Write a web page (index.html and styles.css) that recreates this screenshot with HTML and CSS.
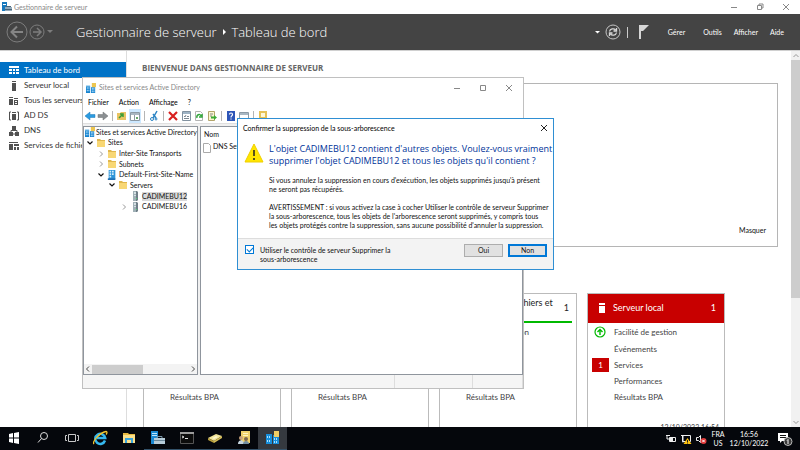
FILE: index.html
```html
<!DOCTYPE html>
<html lang="fr">
<head>
<meta charset="UTF-8">
<meta name="viewport" content="width=device-width, initial-scale=1.0">
<title>Gestionnaire de serveur</title>
<link rel="stylesheet" href="styles.css">
</head>
<body>

<!-- SHARED ICONS -->
<svg class="sprite" aria-hidden="true">
  <symbol id="i-folder" viewBox="0 0 10 10"><path d="M1 1h3l1 1h4v7H1z" fill="#e0b64c"/><path d="M1 3h8v6H1z" fill="#f8d775"/></symbol>
  <symbol id="i-site" viewBox="0 0 12 12"><path d="M2 0h8v11H2z" fill="#2d94d8"/><path d="M3 1h2v2H3zM6 1h2v2H6zM3 4h2v2H3zM6 4h2v2H6zM3 7h2v2H3z" fill="#d4edfb"/><path d="M1 10h9v2H1z" fill="#1f6fb5"/></symbol>
  <symbol id="i-server" viewBox="0 0 10 10"><path d="M3 0h4l1 1v8l-1 1H3z" fill="#6f7f88"/><path d="M3 0h3v10H3z" fill="#9fb0b6"/><path d="M4 1h2v2H4zM4 4h2v1H4z" fill="#d5e0e4"/><path d="M6 7h1v1H6z" fill="#52d273"/></symbol>
  <symbol id="i-ad" viewBox="0 0 12 12"><path d="M0 4h5v8H0zM6 5h5v7H6z" fill="#1683cf"/><path d="M1 5h1v2H1zM3 5h1v2H3zM1 8h1v2H1zM3 8h1v2H3zM7 6h1v2H7zM9 6h1v2H9zM7 9h1v2H7zM9 9h1v2H9z" fill="#c9ebff"/><path d="M7 0h5v5H7z" fill="#edc64f"/><path d="M0 3h5v1H0z" fill="#6db9e6"/></symbol>
  <symbol id="i-close" viewBox="0 0 8 8"><path d="M1 1l6 6M7 1L1 7" fill="none" stroke="currentColor"/></symbol>
  <symbol id="i-min" viewBox="0 0 8 8"><path d="M1 4.500h6" fill="none" stroke="currentColor"/></symbol>
  <symbol id="i-open" viewBox="0 0 8 8"><path d="M1.500 2.500L4 5l2.500-2.500" fill="none" stroke="currentColor" stroke-width="1.200"/></symbol>
  <symbol id="i-shut" viewBox="0 0 8 8"><path d="M3 1.500L5.500 4 3 6.500" fill="none" stroke="currentColor"/></symbol>
</svg>

<div class="desktop">

  <!-- SERVER MANAGER -->
  <div class="titlebar">
    <svg class="ico10" viewBox="0 0 10 10"><path d="M0 0h5v9H0z" fill="#1879bd"/><path d="M1 2h3v1H1z" fill="#fff"/><path d="M3 5h7v4H3z" fill="#93aabb"/><path d="M4 4h5v1H4zM3 7h7v1H3z" fill="#49657a"/></svg>
    <span class="grow">Gestionnaire de serveur</span>
    <button class="winbtn" aria-label="Réduire"><svg class="ico8"><use href="#i-min"/></svg></button>
    <button class="winbtn" aria-label="Restaurer"><svg class="ico8" viewBox="0 0 8 8"><path d="M1.500 2.500h4v4h-4zM3 2V1h4v4H6" fill="none" stroke="currentColor"/></svg></button>
    <button class="winbtn" aria-label="Fermer"><svg class="ico8"><use href="#i-close"/></svg></button>
  </div>

  <div class="header">
    <div class="nav">
      <button aria-label="Précédent"><svg class="back" viewBox="0 0 22 22"><circle cx="11" cy="11" r="10" fill="none" stroke="#7d7d7d"/><path d="M17 11H6M11 5.500L5.500 11l5.500 5.500" fill="none" stroke="#858585" stroke-width="2"/></svg></button>
      <button aria-label="Suivant"><svg class="fwd" viewBox="0 0 16 16"><circle cx="8" cy="8" r="7" fill="none" stroke="#7d7d7d"/><path d="M4 8h8M8 4l4 4-4 4" fill="none" stroke="#7d7d7d" stroke-width="1.500"/></svg></button>
      <svg class="ico8" viewBox="0 0 8 8"><path d="M1 2h6L4 5z" fill="#7d7d7d"/></svg>
    </div>
    <h1>Gestionnaire de serveur <svg class="crumb" viewBox="0 0 8 8"><path d="M3 1l3 3-3 3z" fill="#fff"/></svg> Tableau de bord</h1>
    <div class="tools">
      <svg class="ico8" viewBox="0 0 8 8"><path d="M2 3h5L4.500 5.500z" fill="#fff"/></svg>
      <button aria-label="Actualiser"><svg class="refresh" viewBox="0 0 16 16"><circle cx="8" cy="8" r="7" fill="none" stroke="#c4c4c4"/><path d="M4.500 7.500C5 4.500 9 4 10.500 6M11.500 4v3h-3M11.500 8.500C11 11.500 7 12 5.500 10M4.500 12V9h3" fill="none" stroke="#d8d8d8" stroke-width="1.300"/></svg></button>
      <span class="bar"></span>
      <button aria-label="Notifications"><svg class="flag" viewBox="0 0 12 16"><path d="M1 1h10L5 7H3v8H1z" fill="#d6d6d6"/></svg></button>
    </div>
    <nav class="links"><a href="#">Gérer</a><a href="#">Outils</a><a href="#">Afficher</a><a href="#">Aide</a></nav>
  </div>

  <div class="main">
    <nav class="sidebar">
      <a href="#" class="active"><svg class="ico10" viewBox="0 0 10 10"><path d="M0 1h10v2H0zM0 4h3v2H0zM4 4h2v2H4zM7 4h3v2H7zM0 7h3v2H0zM4 7h2v2H4zM7 7h3v2H7z" fill="#fff"/></svg>Tableau de bord</a>
      <a href="#"><svg class="ico10" viewBox="0 0 10 10"><path d="M3 0h4v1H3zM3 2h4v8H3z" fill="#505050"/></svg>Serveur local</a>
      <a href="#"><svg class="ico10" viewBox="0 0 10 10"><path d="M0 1h4v1H0zM0 3h4v6H0zM5 2h4v1H5zM5 4h4v5H5z" fill="#505050"/><path d="M6 5h2v1H6zM6 7h2v1H6z" fill="#fff"/></svg>Tous les serveurs</a>
      <a href="#"><svg class="ico10" viewBox="0 0 10 10"><path d="M2 1H.500v8H2M8 1h1.500v8H8" fill="none" stroke="#505050"/><path d="M3 1h4v1H3zM3 3h4v6H3z" fill="#505050"/></svg>AD DS</a>
      <a href="#"><svg class="ico10" viewBox="0 0 10 10"><path d="M3 0h4v4H3zM0 6h4v4H0zM6 6h4v4H6z" fill="#505050"/><path d="M5 3v2M2 6V4.500h6V6M4 8h2" fill="none" stroke="#505050"/></svg>DNS</a>
      <a href="#"><svg class="ico10" viewBox="0 0 10 10"><path d="M0 1h9v1H0zM0 3h4v6H0zM5 3h5v2H5zM5 6h2v3H5zM8 6h2v3H8z" fill="#505050"/></svg>Services de fichiers</a>
    </nav>

    <main class="content">
      <h2>BIENVENUE DANS GESTIONNAIRE DE SERVEUR</h2>
      <section class="welcome"><button>Masquer</button></section>
      <section class="tiles">
        <div class="tile">
          <div class="tile-head"><span class="tile-icon"></span><span class="grow">AD DS</span><span>1</span></div>
          <ul><li>Facilité de gestion</li><li>Événements</li><li>Services</li><li>Performances</li><li>Résultats BPA</li></ul>
        </div>
        <div class="tile">
          <div class="tile-head"><span class="tile-icon"></span><span class="grow">DNS</span><span>1</span></div>
          <ul><li>Facilité de gestion</li><li>Événements</li><li>Services</li><li>Performances</li><li>Résultats BPA</li></ul>
        </div>
        <div class="tile">
          <div class="tile-head"><span class="tile-icon"></span><span class="grow">Services de fichiers et<br>de stockage</span><span>1</span></div>
          <ul><li>Facilité de gestion</li><li>Événements</li><li>Services</li><li>Performances</li><li>Résultats BPA</li></ul>
        </div>
        <div class="tile alert">
          <div class="tile-head"><span class="tile-icon"><svg class="ico10" viewBox="0 0 10 10"><path d="M2 0h6v2H2zM2 3h6v7H2z" fill="#fff"/></svg></span><span class="grow">Serveur local</span><span>1</span></div>
          <ul>
            <li><svg class="up" viewBox="0 0 12 12"><circle cx="6" cy="6" r="5" fill="none" stroke="#00b900" stroke-width="1.200"/><path d="M6 9V3.500M3.500 6L6 3.500 8.500 6" fill="none" stroke="#00b900" stroke-width="1.400"/></svg>Facilité de gestion</li>
            <li>Événements</li>
            <li><span class="count">1</span>Services</li>
            <li>Performances</li>
            <li>Résultats BPA</li>
          </ul>
          <p class="stamp">12/10/2022 16:54</p>
        </div>
      </section>
    </main>

    <div class="vscroll">
      <svg class="ico8" viewBox="0 0 8 8"><path d="M1.500 5L4 2.500 6.500 5" fill="none" stroke="#999"/></svg>
      <span class="thumb"></span>
      <svg class="ico8" viewBox="0 0 8 8"><path d="M1.500 3L4 5.500 6.500 3" fill="none" stroke="#999"/></svg>
    </div>
  </div>

  <!-- TASKBAR -->
  <div class="taskbar">
    <div class="tasks">
      <button class="task" aria-label="Démarrer"><svg viewBox="0 0 16 16"><path d="M3 4l4-1v4.500H3zM8 3l5-1v5.500H8zM3 8.500h4V13l-4-1zM8 8.500h5V14l-5-1z" fill="#fff"/></svg></button>
      <button class="task" aria-label="Rechercher"><svg viewBox="0 0 16 16"><circle cx="9" cy="6" r="3.500" fill="none" stroke="#ddd"/><path d="M6.500 8.500L3 12.500" stroke="#ddd"/></svg></button>
      <button class="task" aria-label="Vue des tâches"><svg viewBox="0 0 16 16"><path d="M4.500 4.500h7v7h-7zM3 5.500H1.500v5H3M13 5.500h1.500v5H13" fill="none" stroke="#c8c8c8"/></svg></button>
      <button class="task" aria-label="Internet Explorer"><svg viewBox="0 0 16 16"><path d="M13 10.500A5 5 0 1 1 13.200 8H5" fill="none" stroke="#35b7ee" stroke-width="2.500"/><path d="M2 14C0 12 7 3 14 1.500c1.500 0 1 2 0 3" fill="none" stroke="#f4c52d" stroke-width="1.300"/></svg></button>
      <button class="task" aria-label="Explorateur de fichiers"><svg viewBox="0 0 16 16"><path d="M2 3h5l1 1h6v9H2z" fill="#e8b93f"/><path d="M2 5h12v8H2z" fill="#fbe08b"/><path d="M4 8h8v5h-2v-3H6v3H4z" fill="#3ba4dc"/></svg></button>
      <button class="task open" aria-label="Gestionnaire de serveur"><svg viewBox="0 0 16 16"><path d="M1 1h7v13H1z" fill="#1a88d2"/><path d="M2 3h5v1H2zM2 5h5v1H2z" fill="#bfe5fa"/><path d="M4 8h11v6H4z" fill="#b6cbd8"/><path d="M7 8V6.500h5V8" fill="none" stroke="#7692a5"/><path d="M4 10h11v1H4z" fill="#6b8799"/></svg></button>
      <button class="task open" aria-label="Invite de commandes"><svg viewBox="0 0 16 16"><path d="M1.500 2.500h13v11h-13z" fill="#0c0c0c" stroke="#555"/><path d="M1 2h14v2H1z" fill="#9c9c9c"/><path d="M3 6l2 1-2 1M6 8.500h3" fill="none" stroke="#ddd"/></svg></button>
      <button class="task open" aria-label="Disque"><svg viewBox="0 0 16 16"><path d="M1 8l8-4 6 2-8 5z" fill="#f2e59a"/><path d="M1 8l6 3v2l-6-3z" fill="#b99f3c"/><path d="M7 11l8-5v2l-8 5z" fill="#d6bd57"/><path d="M5 8l4-2 2 1-4 2z" fill="#fff8d0"/></svg></button>
      <button class="task open" aria-label="Utilisateurs Active Directory"><svg viewBox="0 0 16 16"><path d="M5 1h9v12H5z" fill="#efd06a"/><path d="M7 3h5v1H7zM7 5h5v1H7z" fill="#fff4c0"/><circle cx="5" cy="8" r="2" fill="#c9a27c"/><path d="M2 14c0-5 6-5 6 0z" fill="#c7d5de"/><circle cx="10" cy="9" r="2" fill="#7c6650"/><path d="M7 14c0-4 6-4 6 0z" fill="#728ea2"/></svg></button>
      <button class="task open current" aria-label="Sites et services Active Directory"><svg viewBox="0 0 16 16"><path d="M1 4h6v10H1zM8 5h6v9H8z" fill="#168edb"/><path d="M2 6h1v2H2zM4 6h1v2H4zM2 10h1v2H2zM4 10h1v2H4zM9 8h1v2H9zM11 8h1v2h-1zM9 11h1v2H9zM11 11h1v2h-1z" fill="#a9e0ff"/><path d="M9 1h5v6H9z" fill="#f0cf66"/></svg></button>
    </div>
    <span class="grow"></span>
    <div class="tray">
      <svg viewBox="0 0 12 12"><path d="M4.500 4.500h6v4h-6z" fill="none" stroke="#eee"/><path d="M5 5h3v3H5z" fill="#eee"/><path d="M1 2.500h4M2 3v3h2" fill="none" stroke="#eee"/></svg>
      <svg viewBox="0 0 12 12"><path d="M2.500 2.500h8v6h-8zM1 2.500h2v7" fill="none" stroke="#eee"/><path d="M7.500 5l4 6h-8z" fill="#ffc20e"/><path d="M7.500 7v2M7.500 9.500v1" stroke="#222"/></svg>
      <svg viewBox="0 0 12 12"><path d="M1.500 4.500h2l2-2v7l-2-2h-2z" fill="none" stroke="#eee"/><circle cx="8.500" cy="8" r="3" fill="#e23838"/><path d="M7.300 6.800l2.400 2.400M9.700 6.800L7.300 9.200" stroke="#fff"/></svg>
    </div>
    <div class="clock lang"><span>FRA</span><span>US</span></div>
    <div class="clock"><span>16:56</span><span>12/10/2022</span></div>
    <button class="notif" aria-label="Notifications"><svg viewBox="0 0 16 16"><path d="M1 2h10v8H5l-2 2v-2H1z" fill="#fff"/><path d="M3 4.500h6M3 6.500h6" stroke="#111"/><circle cx="11" cy="10.500" r="4" fill="#3a3a3a" stroke="#bbb"/><path d="M10 9.500l1-1v4.500" fill="none" stroke="#fff"/></svg></button>
  </div>

  <!-- AD SITES AND SERVICES WINDOW -->
  <div class="window mmc">
    <div class="mmc-title">
      <svg class="ico10"><use href="#i-ad"/></svg>
      <span class="grow">Sites et services Active Directory</span>
      <button class="winbtn" aria-label="Réduire"><svg class="ico8"><use href="#i-min"/></svg></button>
      <button class="winbtn" aria-label="Agrandir"><svg class="ico8" viewBox="0 0 8 8"><path d="M1.500 1.500h5v5h-5z" fill="none" stroke="currentColor"/></svg></button>
      <button class="winbtn" aria-label="Fermer"><svg class="ico8"><use href="#i-close"/></svg></button>
    </div>
    <div class="menubar"><button>Fichier</button><button>Action</button><button>Affichage</button><button>?</button></div>
    <div class="toolbar">
      <button aria-label="Précédent"><svg viewBox="0 0 12 12"><path d="M1 6l5-4v2.500h5v3H6V10z" fill="#2b9be0" stroke="#1d79b8" stroke-width=".5"/></svg></button>
      <button aria-label="Suivant"><svg viewBox="0 0 12 12"><path d="M11 6L6 2v2.500H1v3h5V10z" fill="#8b8f92" stroke="#6d7073" stroke-width=".5"/></svg></button>
      <span class="sep"></span>
      <button aria-label="Dossier parent"><svg viewBox="0 0 12 12"><path d="M1 3h3l1-1h5v8H1z" fill="#e9c463"/><path d="M3 8l3-3M4 4h3v3" fill="none" stroke="#3a9c36" stroke-width="1.500"/></svg></button>
      <button class="on" aria-label="Arborescence"><svg viewBox="0 0 12 12"><path d="M1.500 2.500h9v8h-9z" fill="#fff" stroke="#8c9aa5"/><path d="M2 3h8v2H2z" fill="#a9b7c2"/><path d="M5.500 5v5" stroke="#8c9aa5"/><path d="M7 7h2v2H7z" fill="#69a86a"/></svg></button>
      <span class="sep"></span>
      <button aria-label="Couper"><svg viewBox="0 0 12 12"><path d="M9 1L5 8M5 4l3 4" fill="none" stroke="#2b84c4" stroke-width="1.500"/><circle cx="4" cy="9" r="1.500" fill="none" stroke="#2b84c4"/><circle cx="8" cy="9" r="1" fill="none" stroke="#2b84c4"/></svg></button>
      <span class="sep"></span>
      <button aria-label="Supprimer"><svg viewBox="0 0 12 12"><path d="M2 2l8 8M10 2l-8 8" stroke="#d8201f" stroke-width="2.200"/></svg></button>
      <button aria-label="Propriétés"><svg viewBox="0 0 12 12"><path d="M2.500 1.500h8v9h-8z" fill="#fff" stroke="#8292a0"/><path d="M3 2h7v2H3z" fill="#9fb4c5"/><path d="M4 6l1 1 1-2M7 6.500h2M4 8.500h5" fill="none" stroke="#7b8790"/></svg></button>
      <button aria-label="Actualiser"><svg viewBox="0 0 12 12"><path d="M2.500 1.500h5l2 2v7h-7z" fill="#fff" stroke="#b3b3b3"/><path d="M4 8c-1-3 3-5 4-2M9 4v3H6" fill="none" stroke="#31a63a" stroke-width="1.400"/></svg></button>
      <button aria-label="Exporter"><svg viewBox="0 0 12 12"><path d="M2.500 1.500h6v9h-6z" fill="#fbf6d0" stroke="#b3a56b"/><path d="M4 4h3M4 6h2" stroke="#888"/><path d="M5 6.500h3V5l3 2.500L8 10V8.500H5z" fill="#3dab35"/></svg></button>
      <span class="sep"></span>
      <button aria-label="Aide"><svg viewBox="0 0 12 12"><path d="M2 1h8v10H2z" fill="#2e56b8"/><path d="M4.500 4.500c0-2 3-2 3 0C7.500 6 6 5.500 6 7.500M6 8.500v1" fill="none" stroke="#fff" stroke-width="1.200"/></svg></button>
      <button aria-label="Fenêtre"><svg viewBox="0 0 12 12"><path d="M1.500 2.500h9v7h-9z" fill="#fff" stroke="#8c9aa5"/><path d="M2 3h8v2H2z" fill="#a9b7c2"/></svg></button>
      <span class="sep"></span>
      <button aria-label="Rechercher"><svg viewBox="0 0 12 12"><path d="M2 1h8v9H2z" fill="#e6c257"/><path d="M4 3h4v4H4z" fill="#fff7d6"/></svg></button>
    </div>
    <div class="panes">
      <div class="tree">
        <ul>
          <li class="l0"><svg class="ico10"><use href="#i-ad"/></svg>Sites et services Active Directory</li>
          <li class="l1"><svg class="ico8"><use href="#i-open"/></svg><svg class="ico10"><use href="#i-folder"/></svg>Sites</li>
          <li class="l2"><svg class="ico8 dim"><use href="#i-shut"/></svg><svg class="ico10"><use href="#i-folder"/></svg>Inter-Site Transports</li>
          <li class="l2"><svg class="ico8 dim"><use href="#i-shut"/></svg><svg class="ico10"><use href="#i-folder"/></svg>Subnets</li>
          <li class="l2"><svg class="ico8"><use href="#i-open"/></svg><svg class="ico10"><use href="#i-site"/></svg>Default-First-Site-Name</li>
          <li class="l3"><svg class="ico8"><use href="#i-open"/></svg><svg class="ico10"><use href="#i-folder"/></svg>Servers</li>
          <li class="l4"><span class="ico8"></span><svg class="ico10"><use href="#i-server"/></svg><span class="picked">CADIMEBU12</span></li>
          <li class="l4"><svg class="ico8 dim"><use href="#i-shut"/></svg><svg class="ico10"><use href="#i-server"/></svg>CADIMEBU16</li>
        </ul>
        <div class="hscroll">
          <svg class="ico8" viewBox="0 0 8 8"><path d="M5 1.500L2.500 4 5 6.500" fill="none" stroke="#444"/></svg>
          <span class="track"><span class="thumb"></span></span>
          <svg class="ico8" viewBox="0 0 8 8"><path d="M3 1.500L5.500 4 3 6.500" fill="none" stroke="#444"/></svg>
        </div>
      </div>
      <div class="list">
        <table>
          <thead><tr><th>Nom</th></tr></thead>
          <tbody><tr><td><svg class="ico10" viewBox="0 0 10 10"><path d="M1.500.500h5l2 2v7h-7z" fill="#fff" stroke="#aaa"/></svg>DNS Settings</td></tr></tbody>
        </table>
      </div>
    </div>
    <div class="statusbar"><span class="grow"></span><span class="s1"></span><span class="s2"></span></div>
  </div>

  <!-- CONFIRM DIALOG -->
  <div class="window dialog" role="dialog" aria-labelledby="dlg-title">
    <div class="dlg-title">
      <span class="grow" id="dlg-title">Confirmer la suppression de la sous-arborescence</span>
      <button class="winbtn" aria-label="Fermer"><svg class="ico8"><use href="#i-close"/></svg></button>
    </div>
    <div class="dlg-body">
      <svg class="warn" viewBox="0 0 20 20"><path d="M10 1l9 18H1z" fill="#ffe600" stroke="#f0cf00" stroke-linejoin="round"/><path d="M10 7v6M10 15v2" stroke="#222" stroke-width="1.500"/></svg>
      <div>
        <h3>L'objet CADIMEBU12 contient d'autres objets. Voulez-vous vraiment<br>supprimer l'objet CADIMEBU12 et tous les objets qu'il contient ?</h3>
        <p>Si vous annulez la suppression en cours d'exécution, les objets supprimés jusqu'à présent<br>ne seront pas récupérés.</p>
        <p>AVERTISSEMENT : si vous activez la case à cocher Utiliser le contrôle de serveur Supprimer<br>la sous-arborescence, tous les objets de l'arborescence seront supprimés, y compris tous<br>les objets protégés contre la suppression, sans aucune possibilité d'annuler la suppression.</p>
      </div>
    </div>
    <div class="dlg-foot">
      <input type="checkbox" id="use-control" checked>
      <label for="use-control">Utiliser le contrôle de serveur Supprimer la<br>sous-arborescence</label>
      <span class="grow"></span>
      <button class="btn">Oui</button>
      <button class="btn default">Non</button>
    </div>
  </div>

</div>

</body>
</html>
```

FILE: styles.css
```css
* { box-sizing: border-box; }
body {
  margin: 0;
  font-family: Lato, "Open Sans", sans-serif;
  font-size: 7px;
  line-height: 9px;
  color: #111;
  background: #fff;
}
h1, h2, h3, p, ul { margin: 0; padding: 0; font-weight: normal; }
h1, h2, h3 { font-family: "Open Sans", sans-serif; }
ul { list-style: none; }
a { color: inherit; text-decoration: none; }
button { font: inherit; color: inherit; background: none; border: 0; padding: 0; }
svg { display: block; flex: none; }
.sprite { display: none; }
.grow { flex: 1; }
.ico8 { width: 8px; height: 8px; flex: none; }
.ico10 { width: 10px; height: 10px; }
.dim { color: #999; }

.desktop {
  position: relative;
  display: flex;
  flex-direction: column;
  height: 100vh;
  overflow: hidden;
  white-space: nowrap;
}

/* server manager */
.titlebar { display: flex; align-items: center; height: 14px; padding: 0 2px; gap: 2px; color: #888; }
.winbtn { display: flex; justify-content: center; width: 26px; color: #888; }
.titlebar .winbtn { width: 24px; }

.header {
  display: flex;
  align-items: center;
  height: 37px;
  background: #444;
  color: #fff;
  border-bottom: 1px solid #d0d0d0;
}
.nav { display: flex; align-items: center; gap: 1px; width: 76px; padding-left: 6px; }
.back { width: 22px; height: 22px; }
.fwd { width: 16px; height: 16px; }
.header h1 { flex: 1; font-size: 13px; line-height: 18px; font-weight: 300; }
.crumb { display: inline-block; width: 8px; height: 8px; vertical-align: 1px; }
.tools { display: flex; align-items: center; gap: 4px; }
.refresh { width: 16px; height: 16px; }
.flag { width: 12px; height: 16px; margin-left: 6px; }
.bar { width: 1px; height: 11px; margin-left: 2px; background: #ccc; }
.links { display: flex; gap: 12px; padding: 0 16px 0 18px; }
.links a:first-child { margin-right: 6px; }

.main { display: flex; flex: 1; min-height: 0; }
.sidebar { width: 127px; flex: none; padding-top: 11px; border-right: 1px solid #ddd; font-size: 8px; overflow: hidden; }
.sidebar a { display: flex; align-items: center; gap: 5px; height: 15px; padding-left: 9px; color: #333; }
.sidebar .active { height: 16px; background: #0072c6; color: #fff; }
.content { flex: 1; padding: 11px 13px 0 15px; min-width: 0; }
.content h2 { font-size: 8px; line-height: 11px; font-weight: bold; color: #666; }
.welcome {
  display: flex;
  align-items: flex-end;
  justify-content: flex-end;
  height: 164px;
  margin-top: 10px;
  padding: 11px;
  border: 1px solid #b5b5b5;
}
.tiles { display: grid; grid-template-columns: repeat(4, 138px); gap: 10px; margin: 46px 0 0 1px; font-size: 8px; }
.tile { height: 160px; border: 1px solid #bbb; color: #444; }
.tile-head {
  display: flex;
  align-items: center;
  height: 29px;
  margin: 0 4px;
  padding-right: 3px;
  border-bottom: 2px solid #00b900;
  color: #222;
  font-size: 9px;
  line-height: 11px;
}
.tile-icon { display: flex; justify-content: center; width: 23px; }
.tile li { position: relative; display: flex; align-items: center; height: 16px; padding-left: 26px; }
.tile li:first-child { height: 18px; }
.tile.alert .tile-head { margin: 0; padding: 0 8px 0 2px; background: #c80000; border-color: #c80000; color: #fff; }
.up { position: absolute; left: 6px; width: 12px; height: 12px; }
.count { position: absolute; left: 4px; width: 17px; line-height: 14px; background: #c80000; color: #fff; text-align: center; }
.stamp { margin-top: 18px; padding-right: 5px; font-size: 7px; text-align: right; }

.vscroll { display: flex; flex-direction: column; align-items: center; width: 9px; padding: 1px 0; background: #f1f1f1; }
.vscroll .thumb { width: 100%; height: 238px; margin-bottom: auto; background: #cdcdcd; }

/* taskbar */
.taskbar { display: flex; align-items: stretch; height: 23px; background: #05070c; color: #fff; }
.tasks { display: flex; width: 287px; }
.task { display: flex; flex: 1; align-items: center; justify-content: center; border-bottom: 1px solid transparent; }
.task svg { width: 16px; height: 16px; }
.task.open { border-color: #34526a; }
.task.current { background: #35393f; }
.tray { display: flex; align-items: center; gap: 3px; }
.tray svg { width: 12px; height: 12px; }
.clock { display: flex; flex-direction: column; justify-content: center; align-items: center; width: 40px; }
.clock.lang { width: 22px; }
.notif { width: 31px; display: flex; align-items: center; justify-content: center; }
.notif svg { width: 16px; height: 16px; }

/* windows */
.window { position: absolute; display: flex; flex-direction: column; background: #fff; }
.mmc { left: 82px; top: 77px; width: 442px; height: 312px; border: 1px solid #c0c0c0; }
.mmc-title { display: flex; align-items: center; height: 19px; padding: 0 1px 0 3px; color: #888; }
.mmc-title .grow { padding-left: 3px; }
.menubar { display: flex; gap: 10px; height: 11px; padding-left: 5px; color: #000; }
.toolbar { display: flex; align-items: center; gap: 1px; height: 16px; padding-left: 1px; border-bottom: 1px solid #e0e0e0; }
.toolbar button { padding: 1px 0; }
.toolbar .on { background: #cce8ff; }
.toolbar svg { width: 12px; height: 12px; }
.sep { width: 1px; height: 10px; margin: 0 2px; background: #b5b5b5; }
.panes { display: flex; flex: 1; gap: 2px; padding-top: 2px; background: #f0f0f0; }
.tree, .list { background: #fff; border: 1px solid #8f959d; }
.tree { display: flex; flex-direction: column; justify-content: space-between; width: 115px; }
.tree ul { display: grid; grid-auto-rows: 1fr; height: 85px; }
.tree li { display: flex; align-items: center; gap: 2px; padding-left: 2px; }
.tree .l0 { gap: 1px; padding-left: 1px; }
.tree .l2 { padding-left: 13px; }
.tree .l3 { padding-left: 24px; }
.tree .l4 { padding-left: 36px; }
.picked { background: #d9d9d9; }
.hscroll { display: flex; align-items: center; height: 10px; background: #f3f3f3; }
.track { flex: 1; height: 9px; }
.track .thumb { display: block; width: 51px; height: 9px; background: #cdcdcd; }
.list { flex: 1; padding-top: 1px; }
.list table { border-collapse: collapse; }
.list th, .list td { height: 13px; padding: 0 3px; font-weight: normal; text-align: left; }
.list td { padding: 0 1px; }
.list td svg { display: inline-block; margin-right: 1px; vertical-align: middle; }
.statusbar { display: flex; height: 13px; background: #f5f5f5; }
.s1, .s2 { border-left: 1px solid #ddd; width: 78px; }
.s2 { width: 51px; border-right: 1px solid #ddd; }

.dialog { left: 237px; top: 118px; width: 317px; border: 1px solid #2f8fd3; }
.dlg-title { display: flex; align-items: center; height: 18px; padding-left: 5px; color: #000; }
.dlg-title .winbtn { width: 18px; color: #222; }
.dlg-body { display: flex; gap: 5px; padding: 6px 5px 8px 6px; }
.warn { width: 20px; height: 20px; }
.dlg-body h3 { font-size: 9px; line-height: 12px; color: #039; }
.dlg-body p { margin-top: 9px; }
.dlg-foot { display: flex; gap: 5px; height: 31px; padding: 5px 6px; background: #f3f3f3; border-top: 1px solid #ddd; }
.dlg-foot label { padding-top: 2px; }
.dlg-foot input {
  appearance: none;
  position: relative;
  width: 9px;
  height: 9px;
  margin: 1px 1px 0;
  border: 1px solid #0078d7;
  background: #fff;
}
.dlg-foot input:checked::after {
  content: "";
  position: absolute;
  left: 2px;
  top: 0;
  width: 3px;
  height: 5px;
  border: solid #0078d7;
  border-width: 0 1px 1px 0;
  transform: rotate(45deg);
}
.btn { width: 39px; height: 13px; background: #e1e1e1; border: 1px solid #adadad; }
.btn.default { outline: 1px solid #0078d7; outline-offset: -2px; border: 1px solid #0078d7; }
```
